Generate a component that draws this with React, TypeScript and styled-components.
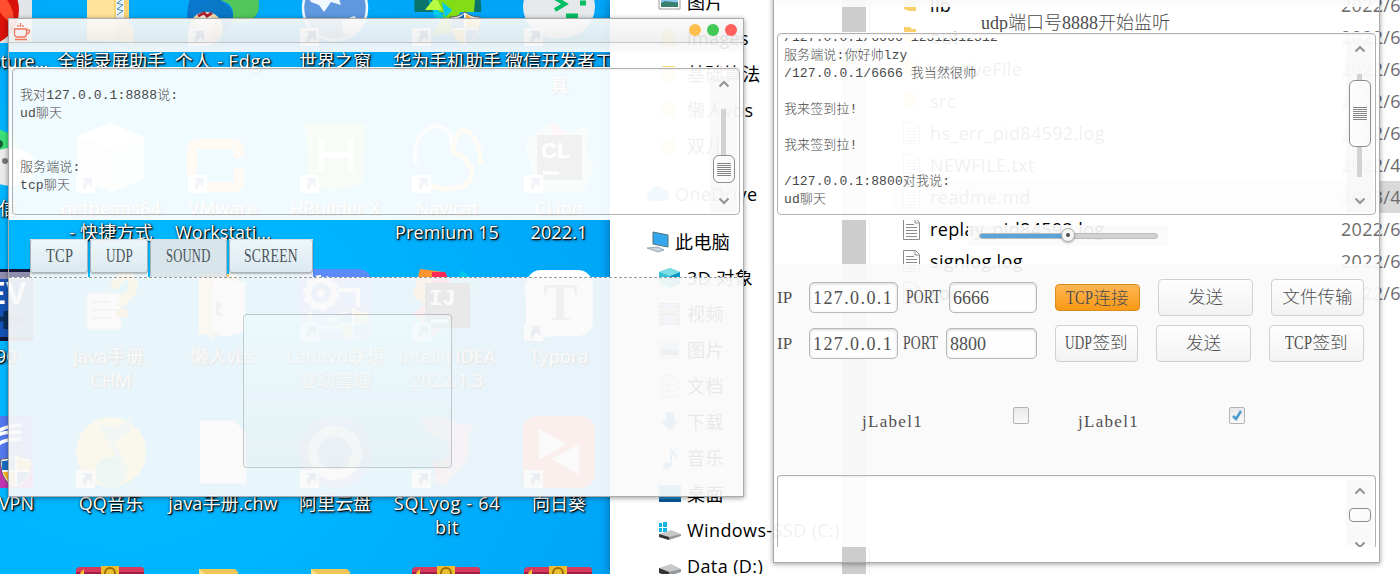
import React from "react";
import styled, { createGlobalStyle } from "styled-components";

const Global = createGlobalStyle`
  * { box-sizing: border-box; }
  body { margin: 0; overflow: hidden; }
`;

const uiFont = `"Open Sans", "Noto Sans CJK SC", sans-serif`;
const logFont = `"Liberation Mono", "Noto Sans CJK SC", monospace`;
const formFont = `"Liberation Serif", "Noto Sans CJK SC", serif`;

/* ---------- desktop ---------- */

const Screen = styled.main`
  position: relative;
  width: 1400px;
  height: 574px;
  overflow: hidden;
  background: radial-gradient(520px 480px at 120px 380px, #00b9ff 0%, #00b5ff 45%, #00a5f8 100%);
`;

const IconGrid = styled.div`
  display: grid;
  grid-template-columns: repeat(6, 112px);
  grid-auto-rows: 147.4px;
  margin: -26px 0 0 -57px;
`;

const Shortcut = styled.div`
  display: flex;
  flex-direction: column;
  align-items: center;
`;

const ShortcutLabel = styled.div<{ $spacing?: number }>`
  margin-top: 3px;
  font: 18px/24px ${uiFont};
  letter-spacing: ${(p) => p.$spacing ?? 0.15}px;
  color: #fff;
  text-align: center;
  white-space: pre;
  text-shadow: 1px 1px 1px #000, 1px 1px 3px rgba(0, 0, 0, 0.9), 0 0 2px rgba(0, 0, 0, 0.5);
`;

const Art = styled.svg`
  display: block;
  width: 72px;
  height: 72px;
  flex: none;
`;

const LinkBadge = () => (
  <g>
    <rect x="1" y="54" width="19" height="18" fill="#fff" />
    <path d="M7 57h10v10l-3.400-3.400c-3 2-3.600 4-3 6.600c-3.600-3-4-7-.4-10.200z" fill="#2b5c9c" />
  </g>
);

const Shield = ({ x, y }: { x: number; y: number }) => (
  <g transform={`translate(${x} ${y})`}>
    <path d="M16 0c5 4 10 5 15 5c1 12-2 23-15 29C3 28 0 17 1 5c5 0 10-1 15-5z" fill="#fff" stroke="#555" />
    <path d="M15 2v14H2V7c5 0 9-1 13-5zM17 18h12c-2 6-6 11-12 14z" fill="#1c6fc4" />
    <path d="M17 2v14h13V7c-5 0-9-1-13-5zM15 18H3c2 6 6 11 12 14z" fill="#fdb92c" />
  </g>
);

const Archive = () => (
  <g>
    <path d="M1 5l3-2h63l2 2v66H1z" fill="#d63a5c" />
    <path d="M1 8h68v3H1z" fill="#a31f45" />
    <path d="M26 2h18v70H26z" fill="#e9bd2d" />
    <circle cx="35" cy="9" r="5" fill="none" stroke="#9b6b08" strokeWidth="2" />
    <path d="M5 9l4-4v8z" fill="#f6c931" />
  </g>
);

const FolderArt = ({ paper }: { paper?: boolean }) => (
  <g>
    <path d="M12 5h36l3 3v54l-7 4H12z" fill="#f1c557" />
    {paper && <path d="M26 8l32 5v50l-23 5-9-8z" fill="#f5f5f5" />}
    <path d="M12 5l14 11v54l-14-9z" fill="#ffdf87" />
    {paper && <path d="M29 33l7 2-4 5 4 8-7-2z" fill="#7c929f" />}
  </g>
);

const art: Record<string, React.ReactNode> = {
  capture: (
    <g>
      <rect x="2" y="0" width="67" height="69" rx="2" fill="#e2e5e7" />
      <circle cx="20" cy="36" r="36" fill="#d91309" />
      <path d="M30 15c15 7 22 20 21 38l-13-13z" fill="#ff4f2f" />
    </g>
  ),
  recorder: (
    <g>
      <path d="M12 0h42v50l5 3v17l-15-3H12z" fill="#f7d274" />
      <path d="M12 0h27v68l-27-5z" fill="#ffe49a" />
      <path d="M41 0h8v45h-8z" fill="#eef3f7" />
      <path d="M42 5l6 2-6 4 6 2-6 4 6 2-6 4 6 2-6 4 6 2-6 4 6 2-6 4" stroke="#458dbf" fill="none" />
    </g>
  ),
  edge: (
    <g>
      <path d="M0 42C1 15 16 0 36 0c21 0 36 14 36 32 0 13-12 19-26 16 7-9 0-21-11-21-17 0-22 20-12 34C8 60 0 53 0 42z" fill="#0b77cc" />
      <path d="M34 3c23-3 38 9 38 29 0 13-14 21-30 14 9-9 1-18-9-20 15-6 16-15 1-23z" fill="#52c65b" />
      <path d="M16 31c16-12 37 2 28 18-7 13-17 18-29 9-5-8-5-20 1-27z" fill="#0878c7" />
      <circle cx="19" cy="55" r="17" fill="#f5dfb0" />
      <path d="M10 46l9-8 8 8-3 25H12z" fill="#fff6e6" />
      <path d="M11 42l6-3 3 3 5-3" stroke="#ac2431" strokeWidth="3" fill="none" />
      <LinkBadge />
    </g>
  ),
  world: (
    <g>
      <circle cx="36" cy="34" r="32" fill="#5f98df" stroke="#edf7ff" strokeWidth="2.500" />
      <path d="M7 20l12-11 10 2 2 7 5-3 9 7-5 3 2 6-10-3-7 10-5-7-8-3zM43 47l12-5 9 7-12 13-8-2z" fill="#f0f7ff" />
      <LinkBadge />
    </g>
  ),
  huawei: (
    <g>
      <path d="M4 39C-1 14 19-3 38 0c21 2 34 15 32 38H4z" fill="#09746b" />
      <path d="M15 34L34 22l31-10-2 26-14 0-6 20-22 4 12-23z" fill="#83dd16" />
      <path d="M17 24l16 19-7 5zM31 28l10 8-7 8z" fill="#00cbed" />
      <path d="M14 36l11-14 6 14z" fill="#b7fb42" />
      <Shield x={38} y={38} />
      <LinkBadge />
    </g>
  ),
  devtools: (
    <g>
      <ellipse cx="36" cy="33" rx="36" ry="32" fill="#e5e9eb" />
      <path d="M32 24l10 6-10 6" fill="none" stroke="#05bd62" strokeWidth="4" />
      <path d="M43 42h12M57 29h6" stroke="#05bd62" strokeWidth="5" />
      <LinkBadge />
    </g>
  ),
  wechat: (
    <g>
      <ellipse cx="25" cy="31" rx="32" ry="24" fill="#3be077" />
      <circle cx="36" cy="23" r="4" fill="#165c34" />
      <ellipse cx="48" cy="46" rx="26" ry="19" fill="#ebebeb" />
      <circle cx="42" cy="40" r="3" fill="#777" />
      <circle cx="59" cy="40" r="3" fill="#777" />
      <path d="M55 60l12 10-3-13z" fill="#ebebeb" />
    </g>
  ),
  netbeans: (
    <g>
      <path d="M2 15L35 2l34 14v42L37 71 3 57z" fill="#dfe5e8" />
      <path d="M2 15l35 12v44L3 57z" fill="#d4dce0" />
      <path d="M2 15L35 2l34 14-32 11z" fill="#fff" />
      <LinkBadge />
    </g>
  ),
  vmware: (
    <g>
      <rect x="20" y="2" width="50" height="51" rx="5" fill="#55aee2" opacity=".25" />
      <path d="M5 56V28q0-5 5-5h37q5 0 5 5v9M20 66h27q5 0 5-5V47" fill="none" stroke="#f9a533" strokeWidth="10" />
      <LinkBadge />
    </g>
  ),
  hbuilder: (
    <g>
      <path d="M6 2h61l-4 61-27 7-27-7z" fill="#79cb72" />
      <path d="M22 17v34M52 17v34M22 34h30" stroke="#fff" strokeWidth="5" />
      <LinkBadge />
    </g>
  ),
  navicat: (
    <g fill="none">
      <path d="M5 43C1 20 11 8 25 5c14 2 16 9 15 18" stroke="#dcd0f5" strokeWidth="4" />
      <path d="M52 9c9 0 19 21 17 32M52 9C46 12 42 22 42 30c11 5 20 15 19 24-4 14-26 18-46 9" stroke="#f7cf65" strokeWidth="5" strokeLinecap="round" />
      <LinkBadge />
    </g>
  ),
  clion: (
    <g>
      <path d="M2 21L28 1l16 10 22-6-3 24 8 15-10 26H14z" fill="#83dcb2" />
      <path d="M28 1l16 10-5 19-11-9z" fill="#f66d9d" />
      <rect x="14" y="14" width="45" height="45" fill="#171717" />
      <text x="18" y="37" fill="#fff" fontFamily="Liberation Sans" fontWeight="700" fontSize="22">CL</text>
      <path d="M20 52h16" stroke="#fff" strokeWidth="3" />
      <LinkBadge />
    </g>
  ),
  ev: (
    <g>
      <rect x="0" y="0" width="70" height="72" fill="#111838" />
      <path d="M0 3h69v65H0z" fill="#1652b3" />
      <path d="M0 3h69v7H0z" fill="#8e8dae" />
      <text x="22" y="35" fill="#fff" fontFamily="Liberation Sans" fontWeight="700" fontSize="31">EV</text>
      <path d="M28 50h36M43 42v18" stroke="#092d59" strokeWidth="5" />
    </g>
  ),
  help: (
    <g>
      <path d="M12 24h34v36H12z" fill="#f3f3f3" stroke="#a2b4c0" />
      <path d="M17 33h18M17 41h23M17 49h20" stroke="#7b97a9" strokeWidth="2" />
      <path d="M40 20C40 4 61 2 58 18c-1 9-11 10-11 19" fill="none" stroke="#f7c52a" strokeWidth="9" />
      <path d="M41 40h12v8H41z" fill="#edaf21" />
    </g>
  ),
  folder: <FolderArt />,
  paperFolder: <FolderArt paper />,
  lenovo: (
    <g>
      <rect x="0" y="0" width="72" height="72" rx="12" fill="#5b8bfb" />
      <circle cx="22" cy="24" r="13" fill="none" stroke="#fff" strokeWidth="6" />
      <circle cx="22" cy="24" r="16" fill="none" stroke="#fff" strokeWidth="4" strokeDasharray="5 5" />
      <circle cx="22" cy="24" r="4" fill="#fff" />
      <path d="M39 21h20v17M11 43v15h30M27 51h15" fill="none" stroke="#fff" strokeWidth="4" />
      <Shield x={38} y={38} />
      <LinkBadge />
    </g>
  ),
  intellij: (
    <g>
      <path d="M9 0l24 3 11 19-20 22-22-17z" fill="#ff9531" />
      <path d="M21 3h13l6 12-19 1z" fill="#fe2857" />
      <path d="M50 1l22 17-15 10-12-9z" fill="#00c9e9" />
      <path d="M2 44l20-15 11 29-11 10z" fill="#ff5b91" />
      <rect x="14" y="14" width="45" height="45" fill="#171717" />
      <text x="18" y="36" fill="#fff" fontFamily="Liberation Mono" fontWeight="700" fontSize="22">IJ</text>
      <path d="M20 52h17" stroke="#fff" strokeWidth="3" />
      <LinkBadge />
    </g>
  ),
  typora: (
    <g>
      <path d="M1 16l9 53 49-5z" fill="#fff" stroke="#ddd" />
      <rect x="3" y="1" width="67" height="66" rx="15" fill="#fff" />
      <text x="20" y="51" fill="#777" fontFamily="Liberation Serif" fontWeight="700" fontSize="52">T</text>
      <LinkBadge />
    </g>
  ),
  vpn: (
    <g>
      <rect x="0" y="0" width="70" height="72" fill="#5379ed" />
      <path d="M0 50h70v22H0z" fill="#c134ae" />
      <path d="M20 36c12-21 20-20 38-20M20 29c12-14 20-19 38-20M25 40c10-15 17-17 33-17" stroke="#fff" strokeWidth="3.500" fill="none" />
      <Shield x={37} y={38} />
    </g>
  ),
  qq: (
    <g>
      <circle cx="36" cy="36" r="35" fill="#fddb4b" />
      <circle cx="36" cy="56" r="15" fill="#47c58b" />
      <path d="M24 9l18 2 13-9 1 13-17 10 13 26c0 7-2 11-6 14 0-23-12-38-22-56z" fill="#8fcfb2" />
      <LinkBadge />
    </g>
  ),
  file: <path d="M13 5h34l12 12v50H13z" fill="#fff" stroke="#eee" />,
  aliyun: (
    <g>
      <circle cx="36" cy="36" r="36" fill="#957cde" opacity=".65" />
      <circle cx="36" cy="37" r="22" fill="none" stroke="#fff" strokeWidth="10" />
      <path d="M50 39l14 2-12 15z" fill="#fff" />
      <LinkBadge />
    </g>
  ),
  sqlyog: (
    <g>
      <path d="M9 4c16-6 24-4 39 4l17-1-8 10c6 27-9 38-24 53l-11-5 6-20c9-3 13-12 5-22-12-1-18-7-24-19z" fill="#b399bc" />
      <path d="M20 43l10 7 8 18-13-10z" fill="#d4768d" />
      <LinkBadge />
    </g>
  ),
  sunflower: (
    <g>
      <rect x="0" y="0" width="72" height="72" rx="14" fill="#ff6b3d" />
      <path d="M16 13l27 15-27 16zM56 28v31L29 43z" fill="#fff" />
      <LinkBadge />
    </g>
  ),
  archive: <Archive />,
  blank: null,
};

type ShortcutItem = [kind: string, label: string, spacing?: number];

const shortcuts: ShortcutItem[] = [
  ["capture", "FSCapture...", -0.2], ["recorder", "全能录屏助手", 0], ["edge", "个人 - Edge", 0.5], ["world", "世界之窗", 0], ["huawei", "华为手机助手", 0], ["devtools", "微信开发者工\n具", 0],
  ["wechat", "微信", 0], ["netbeans", "netbeans64\n- 快捷方式"], ["vmware", "VMware\nWorkstati..."], ["hbuilder", "HBuilder X"], ["navicat", "Navicat\nPremium 15"], ["clion", "CLion\n2022.1"],
  ["ev", "   90"], ["help", "java手册.\nCHM"], ["paperFolder", "懒人vbs"], ["lenovo", "Lenovo联想\n驱动管理"], ["intellij", "IntelliJ IDEA\n2022.1.3"], ["typora", "Typora"],
  ["vpn", "LetsVPN", 0.1], ["qq", "QQ音乐"], ["file", "java手册.chw"], ["aliyun", "阿里云盘", 0], ["sqlyog", "SQLyog - 64\nbit", 0.7], ["sunflower", "向日葵", 0],
  ["blank", ""], ["archive", ""], ["folder", ""], ["folder", ""], ["archive", ""], ["archive", ""],
];

/* ---------- file explorer ---------- */

const Explorer = styled.section`
  position: absolute;
  inset: 0 0 0 610px;
  display: flex;
  overflow: hidden;
  background: #fff;
  box-shadow: 0 0 9px rgba(0, 40, 90, 0.5);
  font: 18px/36px ${uiFont};
  color: #000;
`;

const NavTree = styled.div`
  width: 232px;
  margin-top: -16px;
  flex: none;
`;

const NavRow = styled.div<{ $root?: boolean }>`
  display: flex;
  align-items: center;
  height: 36px;
  gap: 5px;
  margin-top: ${(p) => (p.$root ? 12 : 0)}px;
  padding-left: ${(p) => (p.$root ? 36 : 48)}px;
  white-space: nowrap;
  letter-spacing: 0.4px;
  svg { width: 24px; height: 24px; flex: none; }
`;

const NavScroll = styled.div`
  width: 24px;
  flex: none;
  background: #cdcdcd;
`;

const FileTable = styled.div`
  flex: 1;
  margin: -11px 0 0 3px;
  border-left: 1px solid #f3f3f3;
`;

const FileRow = styled.div<{ $selected?: boolean }>`
  display: grid;
  grid-template-columns: 28px 411px 1fr;
  align-items: center;
  height: 32px;
  margin-left: 24px;
  padding-left: 8px;
  line-height: 32px;
  letter-spacing: 0.35px;
  white-space: nowrap;
  background: ${(p) => (p.$selected ? "#d9d9d9" : "transparent")};
  svg { width: 20px; height: 24px; }
`;

const FileDate = styled.span`
  color: #6d6d6d;
  letter-spacing: 0.3px;
`;

const NavIcon = ({ kind }: { kind: string }) => {
  const shapes: Record<string, React.ReactNode> = {
    picture: <g><path d="M1 4h21v15H1z" fill="#fff" stroke="#999" /><path d="M3 6h17v11H3z" fill="#8cc8ed" /><path d="M3 13c5-4 9 0 17-1v5H3z" fill="#397f70" /></g>,
    folder: <path d="M4 4h13v16H4z" fill="#f9d774" />,
    cloud: <path d="M6 19a5 5 0 01-1-10 7 7 0 0113-1 5.500 5.500 0 011 11z" fill="#2492dc" />,
    pc: <g><path d="M7 2l15 3v12L7 14z" fill="#35a7ee" stroke="#577" /><path d="M1 18l11-1 6 3-6 2z" fill="#c8d5df" stroke="#80919f" strokeWidth=".7" /></g>,
    cube: <g><path d="M1 6l11-4 10 4v12l-10 4-11-4z" fill="#35c4d5" /><path d="M12 10l10-4v12l-10 4z" fill="#0998c8" /><path d="M1 6l11-4 10 4-10 4z" fill="#7ddee5" /></g>,
    film: <g><path d="M1 1h21v22H1z" fill="#777" /><path d="M5 2h13v9H5zM5 13h13v9H5z" fill="#9bb9e8" /><path d="M3 2v20M20 2v20" stroke="#eee" strokeWidth="2" strokeDasharray="2 2" /><path d="M9 8h6v3H9z" fill="#e09452" /></g>,
    doc: <g><path d="M4 1h10l6 5v17H4z" fill="#f8f8f8" stroke="#888" /><path d="M7 8h5M7 11h10M7 14h5M7 17h10" stroke="#568db9" /></g>,
    down: <path d="M8 2h8v9h5l-9 10-9-10h5z" fill="#2694de" />,
    music: <path d="M12 1c1 5 9 5 7 13-1-4-3-5-5-5v10c-1 6-10 5-9 1 0-3 4-5 7-3z" fill="#2694de" />,
    desk: <g><path d="M1 3h22v17H1z" fill="#1688d0" /><path d="M1 17h22v3H1z" fill="#0a5794" /></g>,
    disk: <g><path d="M1 14l12-4 10 5-12 7-10-3z" fill="#c6c8ca" /><path d="M1 14l10 4v4L1 19z" fill="#333" /><path d="M11 18l12-3v3l-12 4z" fill="#96999b" /></g>,
    winDisk: <g><path d="M1 5h3v4H1zM5 4h4v5H5zM1 10h3v4H1zM5 10h4v4H5z" fill="#0bb5e6" /><path d="M1 16l12-4 10 4-12 5-10-2z" fill="#c6c8ca" /><path d="M1 16l10 3v3L1 19z" fill="#333" /><path d="M11 19l12-3v2l-12 4z" fill="#96999b" /></g>,
  };
  return <svg viewBox="0 0 24 24">{shapes[kind]}</svg>;
};

const FileIcon = ({ folder }: { folder?: boolean }) => (
  <svg viewBox="0 0 20 24">
    {folder ? (
      <path d="M2 2h6l2 2h4v14H7l-5-2z" fill="#f9d06a" />
    ) : (
      <g>
        <path d="M1.500 1.500h12l4 4v17h-16z" fill="#fff" stroke="#8c8c8c" />
        <path d="M4 7.500h8M4 10.500h11M4 13.500h11M4 16.500h11M4 19.500h11" stroke="#8c8c8c" />
        <path d="M13 2v4h4" fill="none" stroke="#8c8c8c" />
      </g>
    )}
  </svg>
);

const navItems: [string, string][] = [
  ["picture", "图片"], ["folder", "images"], ["folder", "基础算法"], ["folder", "懒人vbs"], ["folder", "双儿"],
  ["cloud", "OneDrive"], ["pc", "此电脑"], ["cube", "3D 对象"], ["film", "视频"], ["picture", "图片"], ["doc", "文档"],
  ["down", "下载"], ["music", "音乐"], ["desk", "桌面"], ["winDisk", "Windows-SSD (C:)"], ["disk", "Data (D:)"],
];

const files: [string, string][] = [
  ["lib", "2022/6"], ["out", "2022/6"], ["receiveFile", "2022/6"], ["src", "2022/6"], ["hs_err_pid84592.log", "2022/6"],
  ["NEWFILE.txt", "2022/4"], ["readme.md", "2023/4"], ["replay_pid84592.log", "2022/6"], ["signlog.log", "2022/6"], ["socket.iml", "2022/6"],
];

/* ---------- translucent chat windows ---------- */

const veil = "rgba(250, 250, 250, 0.93)";
const paper = "rgba(255, 255, 255, 0.94)";

const ChatWindow = styled.section<{ $x: number; $y: number; $w: number; $h: number }>`
  position: absolute;
  left: ${(p) => p.$x}px;
  top: ${(p) => p.$y}px;
  width: ${(p) => p.$w}px;
  height: ${(p) => p.$h}px;
  display: flex;
  flex-direction: column;
  border: 1px solid #ababab;
  box-shadow: 0 1px 5px rgba(0, 0, 0, 0.4);
`;

const TitleBar = styled.header`
  display: flex;
  align-items: center;
  height: 24px;
  flex: none;
  padding: 0 6px 0 4px;
  border-bottom: 1px solid rgba(170, 170, 170, 0.6);
  background: linear-gradient(rgba(250, 250, 250, 0.92), rgba(238, 238, 238, 0.92));
  svg { margin-right: auto; margin-top: 2px; }
`;

const Dot = styled.i<{ $color: string }>`
  width: 12px;
  height: 12px;
  margin: -2px 0 0 6px;
  border-radius: 50%;
  background: ${(p) => p.$color};
`;

const MenuStrip = styled.div<{ $h: number }>`
  height: ${(p) => p.$h}px;
  flex: none;
  background: linear-gradient(rgba(244, 244, 244, 0.93), rgba(252, 252, 252, 0.93));
`;

const LogArea = styled.div<{ $h: number; $mt: number; $open?: boolean }>`
  height: ${(p) => p.$h}px;
  margin-top: ${(p) => p.$mt}px;
  flex: none;
  padding: ${(p) => (p.$open ? "1px 3px 0" : "1px 3px 5px")};
  background: ${paper};
  overflow: hidden;
`;

const LogFrame = styled.div<{ $open?: boolean }>`
  display: flex;
  justify-content: space-between;
  height: 100%;
  border: 1px solid #b2b2b2;
  border-bottom-width: ${(p) => (p.$open ? 0 : 1)}px;
  border-radius: ${(p) => (p.$open ? "4px 4px 0 0" : "4px")};
  box-shadow: inset 0 1px 2px rgba(0, 0, 0, 0.06);
  overflow: hidden;
`;

const LogClip = styled.div`
  height: 172px;
  margin-top: 4px;
  overflow: hidden;
`;

const LogText = styled.pre<{ $top: number; $left?: number }>`
  margin: ${(p) => p.$top}px 0 0 ${(p) => p.$left ?? 6}px;
  font: 300 13px/18px ${logFont};
  letter-spacing: 0.12px;
  color: #494949;
`;

const ScrollBar = styled.div<{ $top: number }>`
  display: flex;
  flex-direction: column;
  align-items: center;
  width: 27px;
  margin: ${(p) => p.$top}px 2px 2px 0;
  background: rgba(240, 240, 240, 0.38);
  svg { flex: none; }
`;

const Rail = styled.div<{ $h: number }>`
  width: 5px;
  height: ${(p) => p.$h}px;
  flex: none;
  background: #d2d2d2;
`;

const Thumb = styled.div<{ $h: number; $grip?: boolean }>`
  display: flex;
  align-items: center;
  justify-content: center;
  width: 22px;
  height: ${(p) => p.$h}px;
  flex: none;
  border: 1px solid #8d8d8d;
  border-radius: ${(p) => (p.$grip ? 6 : 4)}px;
  background: linear-gradient(90deg, rgba(255, 255, 255, 0.8), rgba(250, 250, 250, 0.5));
  &::after {
    content: "";
    width: 14px;
    height: ${(p) => (p.$grip ? 13 : 0)}px;
    background: repeating-linear-gradient(#858585 0 1px, transparent 1px 2px);
  }
`;

const Space = styled.div<{ $h: number }>`
  height: ${(p) => p.$h}px;
  flex: none;
`;

const Chevron = ({ down }: { down?: boolean }) => (
  <svg width="12" height="8" viewBox="0 0 12 8">
    <path d={down ? "M1.500 1.500L6 6l4.500-4.500" : "M1.500 6.500L6 2l4.500 4.500"} fill="none" stroke="#939393" strokeWidth="2" />
  </svg>
);

/* Latin capitals squeezed to the half-width cell of the form typeface. */
const HalfWidth = styled.span<{ $w: number; $scale: number }>`
  display: inline-block;
  width: ${(p) => p.$w}px;
  font-size: 18px;
  letter-spacing: 0.3px;
  text-align: left;
  white-space: nowrap;
  transform: scaleX(${(p) => p.$scale});
  transform-origin: left center;
`;

const TabStrip = styled.div`
  display: flex;
  height: 57px;
  flex: none;
  padding: 19px 0 0 21px;
  gap: 2px;
`;

const Tab = styled.div<{ $w: number; $on?: boolean }>`
  width: ${(p) => p.$w}px;
  height: 38px;
  background: ${veil};
`;

const TabFace = styled.div<{ $on?: boolean }>`
  height: ${(p) => (p.$on ? 38 : 34)}px;
  border: 1px solid #a9b4b9;
  border-top-color: #d7dfe3;
  border-bottom-width: ${(p) => (p.$on ? 0 : 1)}px;
  border-radius: 3px;
  background: ${(p) => (p.$on ? "rgba(190, 203, 210, 0.38)" : "linear-gradient(rgba(255,255,255,.2), rgba(200,214,222,.38))")};
  box-shadow: ${(p) => (p.$on ? "none" : "0 1px 2px rgba(0,0,0,.25)")};
  font: 18px/33px ${formFont};
  text-align: center;
  color: #4b555a;
`;

const TabBody = styled.div`
  flex: 1;
  padding: 37px 0 0 234px;
  background:
    repeating-linear-gradient(90deg, #9b9b9b 0 3px, #fff 3px 5px) top / 100% 1px no-repeat,
    ${veil};
`;

const PreviewBox = styled.div`
  width: 209px;
  height: 154px;
  border: 1px solid rgba(0, 0, 0, 0.18);
  border-radius: 4px;
  background: linear-gradient(rgba(240, 252, 255, 0.5), rgba(220, 230, 232, 0.22));
`;

const StatusRow = styled.div`
  height: 25px;
  flex: none;
  padding-left: 207px;
  font: 300 18px/32px ${formFont};
  color: #4b4b4b;
`;

const SliderRow = styled.div`
  display: flex;
  height: 44px;
  flex: none;
  padding: 5px 0 0 194px;
`;

const SliderBox = styled.div`
  position: relative;
  width: 200px;
  height: 21px;
  padding: 8px 10px 0 11px;
  background: ${veil};
`;

const SliderTrack = styled.div`
  height: 6px;
  border: 1px solid #bcbcbc;
  border-radius: 3px;
  background: linear-gradient(90deg, #5ba4da 50%, #d2d2d2 50%);
`;

const SliderKnob = styled.div`
  position: absolute;
  left: 93px;
  top: 3px;
  width: 14px;
  height: 14px;
  border: 1px solid #aaa;
  border-radius: 50%;
  background: radial-gradient(#555 0 1.500px, #f6f6f6 2.500px);
  box-shadow: 0 1px 2px rgba(0, 0, 0, 0.3);
`;

const Controls = styled.div`
  height: 210px;
  flex: none;
  padding: 15px 0 0 3px;
  background: ${veil};
  font: 300 17px/20px ${formFont};
  color: #505050;
`;

const ControlRow = styled.div`
  display: flex;
  align-items: center;
  height: 37px;
  margin-bottom: 9px;
`;

const Caption = styled.div<{ $w: number }>`
  width: ${(p) => p.$w}px;
  flex: none;
`;

const Field = styled.div<{ $w: number; $mr: number; $ls: number }>`
  width: ${(p) => p.$w}px;
  height: 31px;
  flex: none;
  margin-right: ${(p) => p.$mr}px;
  padding-left: 3px;
  border: 1px solid #b8b8b8;
  border-radius: 5px;
  background: rgba(255, 255, 255, 0.8);
  box-shadow: inset 0 1px 3px rgba(0, 0, 0, 0.16);
  font-size: 18px;
  line-height: 30px;
  letter-spacing: ${(p) => p.$ls}px;
`;

const Button = styled.div<{ $w: number; $mr?: number; $hot?: boolean }>`
  width: ${(p) => p.$w}px;
  height: ${(p) => (p.$hot ? 27 : 37)}px;
  flex: none;
  margin-right: ${(p) => p.$mr ?? 0}px;
  border: 1px solid ${(p) => (p.$hot ? "#dc8c1d" : "#d0d0d0")};
  border-radius: 4px;
  background: ${(p) => (p.$hot ? "linear-gradient(#ffb653, #fa9915)" : "linear-gradient(#fefefe, #f3f3f3)")};
  font-size: 17.600px;
  line-height: ${(p) => (p.$hot ? 26 : 35)}px;
  text-align: center;
  white-space: nowrap;
`;

const OptionRow = styled.div`
  display: flex;
  align-items: flex-start;
  padding: 36px 0 0 85px;
`;

const OptionLabel = styled.span<{ $w: number }>`
  width: ${(p) => p.$w}px;
  padding-top: 5px;
  letter-spacing: 1.3px;
`;

const Check = styled.div<{ $mr?: number }>`
  width: 16px;
  height: 17px;
  margin-right: ${(p) => p.$mr ?? 0}px;
  border: 1px solid #b4b4b4;
  border-radius: 2px;
  background: linear-gradient(#e9e9e9, #f9f9f9);
  svg { display: block; }
`;

const logLeft = `我对127.0.0.1:8888说:
ud聊天


服务端说:
tcp聊天`;

const logRight = `/127.0.0.1/6666 12312312312
服务端说:你好帅lzy
/127.0.0.1/6666 我当然很帅

我来签到拉!

我来签到拉!

/127.0.0.1:8800对我说:
ud聊天`;

const tabs = [
  { name: "TCP", w: 58, textW: 27, scale: 0.8 },
  { name: "UDP", w: 58, textW: 27, scale: 0.73 },
  { name: "SOUND", w: 77, textW: 45, scale: 0.7, on: true },
  { name: "SCREEN", w: 84, textW: 54, scale: 0.76 },
];

const Tcp = () => <HalfWidth $w={27} $scale={0.8}>TCP</HalfWidth>;
const Udp = () => <HalfWidth $w={27} $scale={0.73}>UDP</HalfWidth>;
const Port = () => <HalfWidth $w={36} $scale={0.76}>PORT</HalfWidth>;

export default function App() {
  return (
    <Screen>
      <Global />
      <IconGrid>
        {shortcuts.map(([kind, label, spacing], i) => (
          <Shortcut key={i}>
            <Art viewBox="0 0 72 72">{art[kind]}</Art>
            <ShortcutLabel $spacing={spacing}>{label}</ShortcutLabel>
          </Shortcut>
        ))}
      </IconGrid>

      <Explorer>
        <NavTree>
          {navItems.map(([kind, name], i) => (
            <NavRow key={i} $root={kind === "cloud" || kind === "pc"}>
              <NavIcon kind={kind} />
              {name}
            </NavRow>
          ))}
        </NavTree>
        <NavScroll />
        <FileTable>
          {files.map(([name, date], i) => (
            <FileRow key={name} $selected={i === 6}>
              <FileIcon folder={i < 4} />
              <span>{name}</span>
              <FileDate>{date}</FileDate>
            </FileRow>
          ))}
        </FileTable>
      </Explorer>

      <ChatWindow $x={8} $y={18} $w={736} $h={479}>
        <TitleBar>
          <svg width="18" height="19" viewBox="0 0 18 19" fill="none" stroke="#f0775c" strokeWidth="1.300">
            <path d="M1.500 7h12v5c0 2-1 3-3 3h-6c-2 0-3-1-3-3zM13.500 8h2c2 0 1 4-2 4M2 17.500h12M5 5V3M7.500 5V1M10 5V3" />
          </svg>
          <Dot $color="#ffbe4d" />
          <Dot $color="#42c955" />
          <Dot $color="#ff605d" />
        </TitleBar>
        <MenuStrip $h={9} />
        <LogArea $h={153} $mt={15}>
          <LogFrame>
            <LogText $top={18} $left={7}>{logLeft}</LogText>
            <ScrollBar $top={7}>
              <Space $h={4} />
              <Chevron />
              <Space $h={21} />
              <Rail $h={46} />
              <Thumb $h={28} $grip />
              <Space $h={14} />
              <Chevron down />
            </ScrollBar>
          </LogFrame>
        </LogArea>
        <TabStrip>
          {tabs.map((t) => (
            <Tab key={t.name} $w={t.w}>
              <TabFace $on={t.on}>
                <HalfWidth $w={t.textW} $scale={t.scale}>{t.name}</HalfWidth>
              </TabFace>
            </Tab>
          ))}
        </TabStrip>
        <TabBody>
          <PreviewBox />
        </TabBody>
      </ChatWindow>

      <ChatWindow $x={773} $y={-20} $w={607} $h={583}>
        <MenuStrip $h={26} />
        <StatusRow>udp端口号8888开始监听</StatusRow>
        <LogArea $h={188} $mt={0}>
          <LogFrame>
            <LogClip>
              <LogText $top={-9}>{logRight}</LogText>
            </LogClip>
            <ScrollBar $top={4}>
              <Space $h={7} />
              <Chevron />
              <Space $h={21} />
              <Rail $h={6} />
              <Thumb $h={67} $grip />
              <Rail $h={30} />
              <Space $h={20} />
              <Chevron down />
            </ScrollBar>
          </LogFrame>
        </LogArea>
        <SliderRow>
          <SliderBox>
            <SliderTrack />
            <SliderKnob />
          </SliderBox>
        </SliderRow>
        <Controls>
          <ControlRow>
            <Caption $w={32}>IP</Caption>
            <Field $w={89} $mr={8} $ls={1.4}>127.0.0.1</Field>
            <Caption $w={43}><Port /></Caption>
            <Field $w={88} $mr={18} $ls={0}>6666</Field>
            <Button $w={85} $mr={18} $hot><Tcp />连接</Button>
            <Button $w={95} $mr={18}>发送</Button>
            <Button $w={93}>文件传输</Button>
          </ControlRow>
          <ControlRow>
            <Caption $w={32}>IP</Caption>
            <Field $w={89} $mr={5} $ls={1.4}>127.0.0.1</Field>
            <Caption $w={43}><Port /></Caption>
            <Field $w={91} $mr={18} $ls={0}>8800</Field>
            <Button $w={83} $mr={18}><Udp />签到</Button>
            <Button $w={95} $mr={18}>发送</Button>
            <Button $w={95}><Tcp />签到</Button>
          </ControlRow>
          <OptionRow>
            <OptionLabel $w={151}>jLabel1</OptionLabel>
            <Check $mr={49} />
            <OptionLabel $w={151}>jLabel1</OptionLabel>
            <Check>
              <svg width="14" height="15" viewBox="0 0 14 15">
                <path d="M3 8l3 3 5-8" fill="none" stroke="#4c9bd0" strokeWidth="2.500" />
              </svg>
            </Check>
          </OptionRow>
        </Controls>
        <LogArea $h={73} $mt={0} $open>
          <LogFrame $open>
            <LogText $top={0} />
            <ScrollBar $top={4}>
              <Space $h={7} />
              <Chevron />
              <Space $h={13} />
              <Thumb $h={14} />
              <Space $h={19} />
              <Chevron down />
            </ScrollBar>
          </LogFrame>
        </LogArea>
      </ChatWindow>
    </Screen>
  );
}
